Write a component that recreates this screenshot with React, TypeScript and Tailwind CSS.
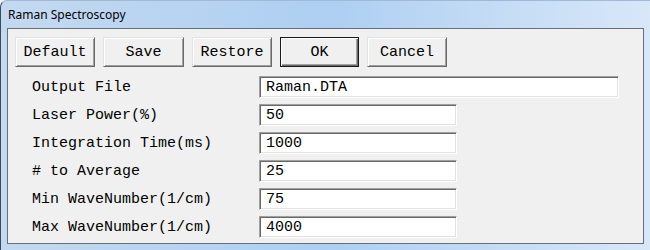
const buttons = [
  { label: "Default", w: "w-[80px]" },
  { label: "Save", w: "w-[81px]" },
  { label: "Restore", w: "w-[80px]" },
  { label: "OK", w: "w-[79px]", def: true },
  { label: "Cancel", w: "w-[80px]" },
];

const fields = [
  { label: "Output File", value: "Raman.DTA", wide: true },
  { label: "Laser Power(%)", value: "50" },
  { label: "Integration Time(ms)", value: "1000" },
  { label: "# to Average", value: "25" },
  { label: "Min WaveNumber(1/cm)", value: "75" },
  { label: "Max WaveNumber(1/cm)", value: "4000" },
];

const mono = "font-['Courier_New','Liberation_Mono',monospace] text-[15px] leading-[18px] text-black";

export default function App() {
  return (
    <div className="w-[650px] h-[250px] overflow-hidden bg-[#f0f0f0]">
      {/* window frame */}
      <div className="w-[660px] h-[260px] rounded-tl-[7px] border-l border-t border-l-[#3c4b5c] border-t-[#9fb9d6] bg-gradient-to-r from-[#c3d9f0] via-[#aecff2] to-[#d9e8f8] flex flex-col">
        {/* title bar */}
        <div className="h-[27px] pl-[7px] pt-[1px] flex items-center text-[12px] text-black font-['Segoe_UI','Noto_Sans',sans-serif]">
          Raman Spectroscopy
        </div>

        {/* client area */}
        <div className="ml-[6px] w-[637px] h-[216px] border border-[#6a6f75] bg-[#f0f0f0] pt-[8px] pl-[7px]">
          <div className="flex gap-[8px]">
            {buttons.map((b) => (
              <button
                key={b.label}
                className={`${b.w} h-[30px] ${mono} bg-[#f0f0f0] flex items-center justify-center pt-[1px] ${
                  b.def
                    ? "border border-[#1a1a1a] shadow-[inset_1px_1px_0_#ffffff,inset_-1px_-1px_0_#696969,inset_-2px_-2px_0_#a0a0a0]"
                    : "border border-t-[#e3e3e3] border-l-[#e3e3e3] border-r-[#696969] border-b-[#696969] shadow-[inset_1px_1px_0_#ffffff,inset_-1px_-1px_0_#a0a0a0]"
                }`}
              >
                {b.label}
              </button>
            ))}
          </div>

          <div className="mt-[6px] pl-[17px] flex flex-col">
            {fields.map((f) => (
              <div key={f.label} className="h-[28px] flex items-center">
                <div className={`w-[227px] pt-[1px] ${mono}`}>{f.label}</div>
                <div
                  className={`${f.wide ? "w-[360px]" : "w-[198px]"} h-[22px] bg-white border border-t-[#a0a0a0] border-l-[#a0a0a0] border-r-white border-b-white shadow-[inset_1px_1px_0_#696969,inset_-1px_-1px_0_#e3e3e3] flex items-center pl-[6px] pt-[1px] ${mono}`}
                >
                  {f.value}
                </div>
              </div>
            ))}
          </div>
        </div>
      </div>
    </div>
  );
}
